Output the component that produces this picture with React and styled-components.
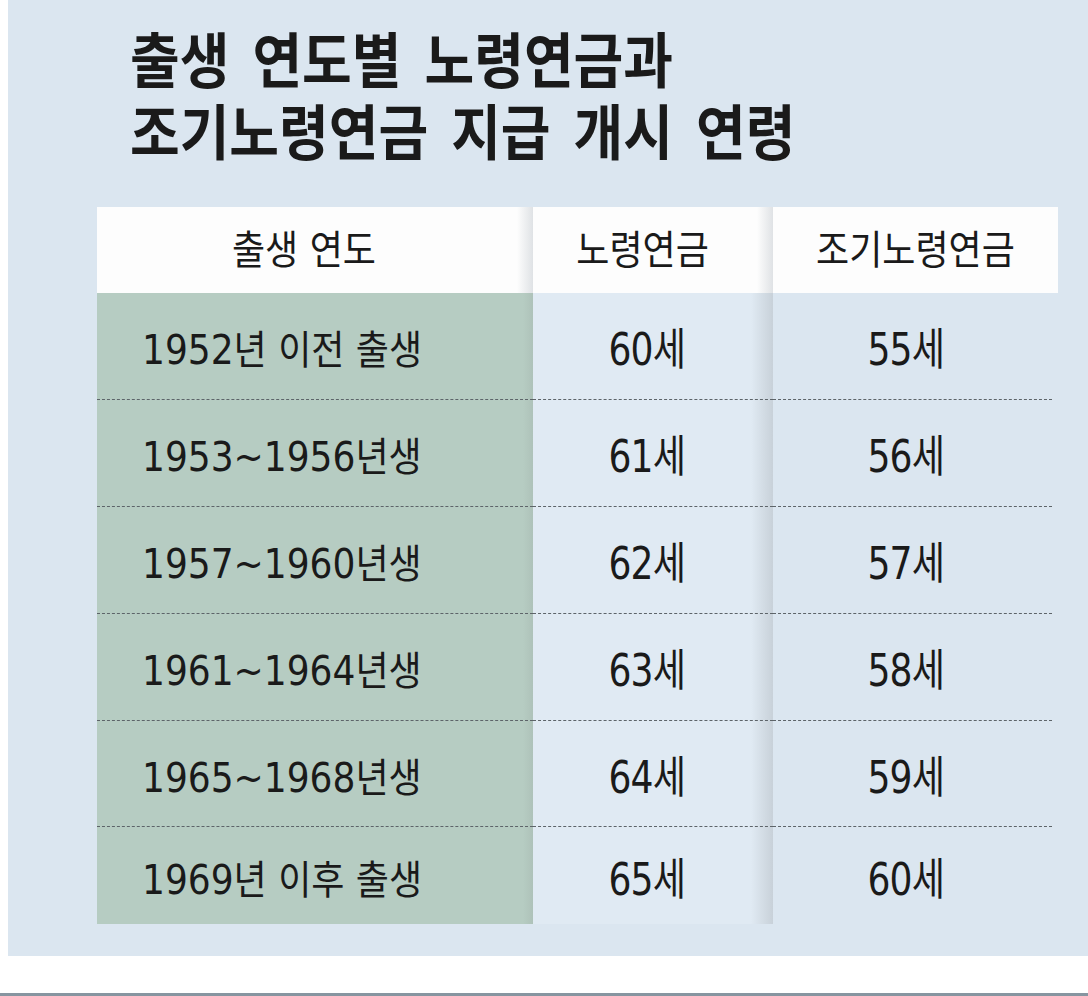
import React from "react";
import styled, { createGlobalStyle } from "styled-components";

const rows = [
  ["1952년 이전 출생", "60세", "55세"],
  ["1953~1956년생", "61세", "56세"],
  ["1957~1960년생", "62세", "57세"],
  ["1961~1964년생", "63세", "58세"],
  ["1965~1968년생", "64세", "59세"],
  ["1969년 이후 출생", "65세", "60세"],
];

const App = () => {
  return (
    <Page>
      <GlobalStyle />
      <Panel>
        <Title>
          <TitleLine>출생 연도별 노령연금과</TitleLine>
          <TitleLine>조기노령연금 지급 개시 연령</TitleLine>
        </Title>
        <Table>
          <HeaderRow>
            <HeadCell $shift="22px">
              <Squeeze>출생 연도</Squeeze>
            </HeadCell>
            <HeadCell $shift="20px">
              <Squeeze>노령연금</Squeeze>
            </HeadCell>
            <HeadCell $last>
              <Squeeze>조기노령연금</Squeeze>
            </HeadCell>
          </HeaderRow>
          <Body>
            {rows.map((row, i) => {
              const last = i === rows.length - 1;
              return (
                <React.Fragment key={row[0]}>
                  <Cell $col={0} $last={last}>
                    <Squeeze $origin="left center">{row[0]}</Squeeze>
                  </Cell>
                  <Cell $col={1} $last={last}>
                    <Value>{row[1]}</Value>
                  </Cell>
                  <Cell $col={2} $last={last}>
                    <Value>{row[2]}</Value>
                  </Cell>
                </React.Fragment>
              );
            })}
          </Body>
        </Table>
      </Panel>
    </Page>
  );
};

const GlobalStyle = createGlobalStyle`
  * {
    box-sizing: border-box;
  }
  body {
    margin: 0;
    background: #ffffff;
    font-family: "Noto Sans CJK KR", sans-serif;
  }
`;

const Page = styled.div`
  height: 996px;
  padding-left: 8px;
  background: #ffffff;
  border-bottom: 3px solid #8795a0;
`;

const Panel = styled.div`
  height: 956px;
  background: #dbe6f0;
  padding: 21px 30px 0 89px;
`;

const Title = styled.h1`
  margin: 0 0 42px 33px;
  font-size: 60px;
  font-weight: 700;
  color: #1a1a1a;
  white-space: nowrap;
  word-spacing: 12px;
  transform: scaleX(0.9);
  transform-origin: left top;
`;

const TitleLine = styled.div`
  height: 72px;
  line-height: 72px;
`;

const Table = styled.div`
  display: flex;
  flex-direction: column;
`;

const HeaderRow = styled.div`
  display: grid;
  grid-template-columns: 436px 240px 285px;
  height: 86px;
`;

const HeadCell = styled.div`
  display: flex;
  align-items: center;
  justify-content: center;
  padding-right: ${({ $shift }) => $shift || "0"};
  background: ${({ $last }) =>
    $last
      ? "#fdfdfd"
      : "linear-gradient(90deg, #fdfdfd calc(100% - 16px), #dfe2e5 100%)"};
  font-family: "DejaVu Sans", "Noto Sans CJK KR", sans-serif;
  font-size: 40px;
  line-height: 1;
  color: #1a1a1a;
`;

const Body = styled.div`
  display: grid;
  grid-template-columns: 436px 240px 279px;
  grid-template-rows: 107px 107px 107px 107px 106px 97px;
`;

const cellBackgrounds = [
  "linear-gradient(90deg, #b6ccc2 calc(100% - 10px), #aec2b9 100%)",
  "linear-gradient(90deg, #e0eaf3 calc(100% - 22px), #c8d1d9 100%)",
  "transparent",
];

const cellPadding = ["8px 0 0 45px", "8px 12px 0 0", "8px 14px 0 0"];

const Cell = styled.div`
  display: flex;
  align-items: center;
  justify-content: ${({ $col }) => ($col === 0 ? "flex-start" : "center")};
  padding: ${({ $col }) => cellPadding[$col]};
  background: ${({ $col }) => cellBackgrounds[$col]};
  border-bottom: ${({ $last }) => ($last ? "none" : "1px dashed #5d6469")};
  font-family: "DejaVu Sans", "Noto Sans CJK KR", sans-serif;
  font-size: 40px;
  line-height: 1;
  color: #1a1a1a;
`;

const Squeeze = styled.span`
  display: inline-block;
  white-space: nowrap;
  transform: scaleX(0.9);
  transform-origin: ${({ $origin }) => $origin || "center"};
`;

const Value = styled.span`
  display: inline-block;
  white-space: nowrap;
  font-size: 44px;
  letter-spacing: -1px;
  transform: scaleX(0.82);
  transform-origin: center;
`;

export default App;
